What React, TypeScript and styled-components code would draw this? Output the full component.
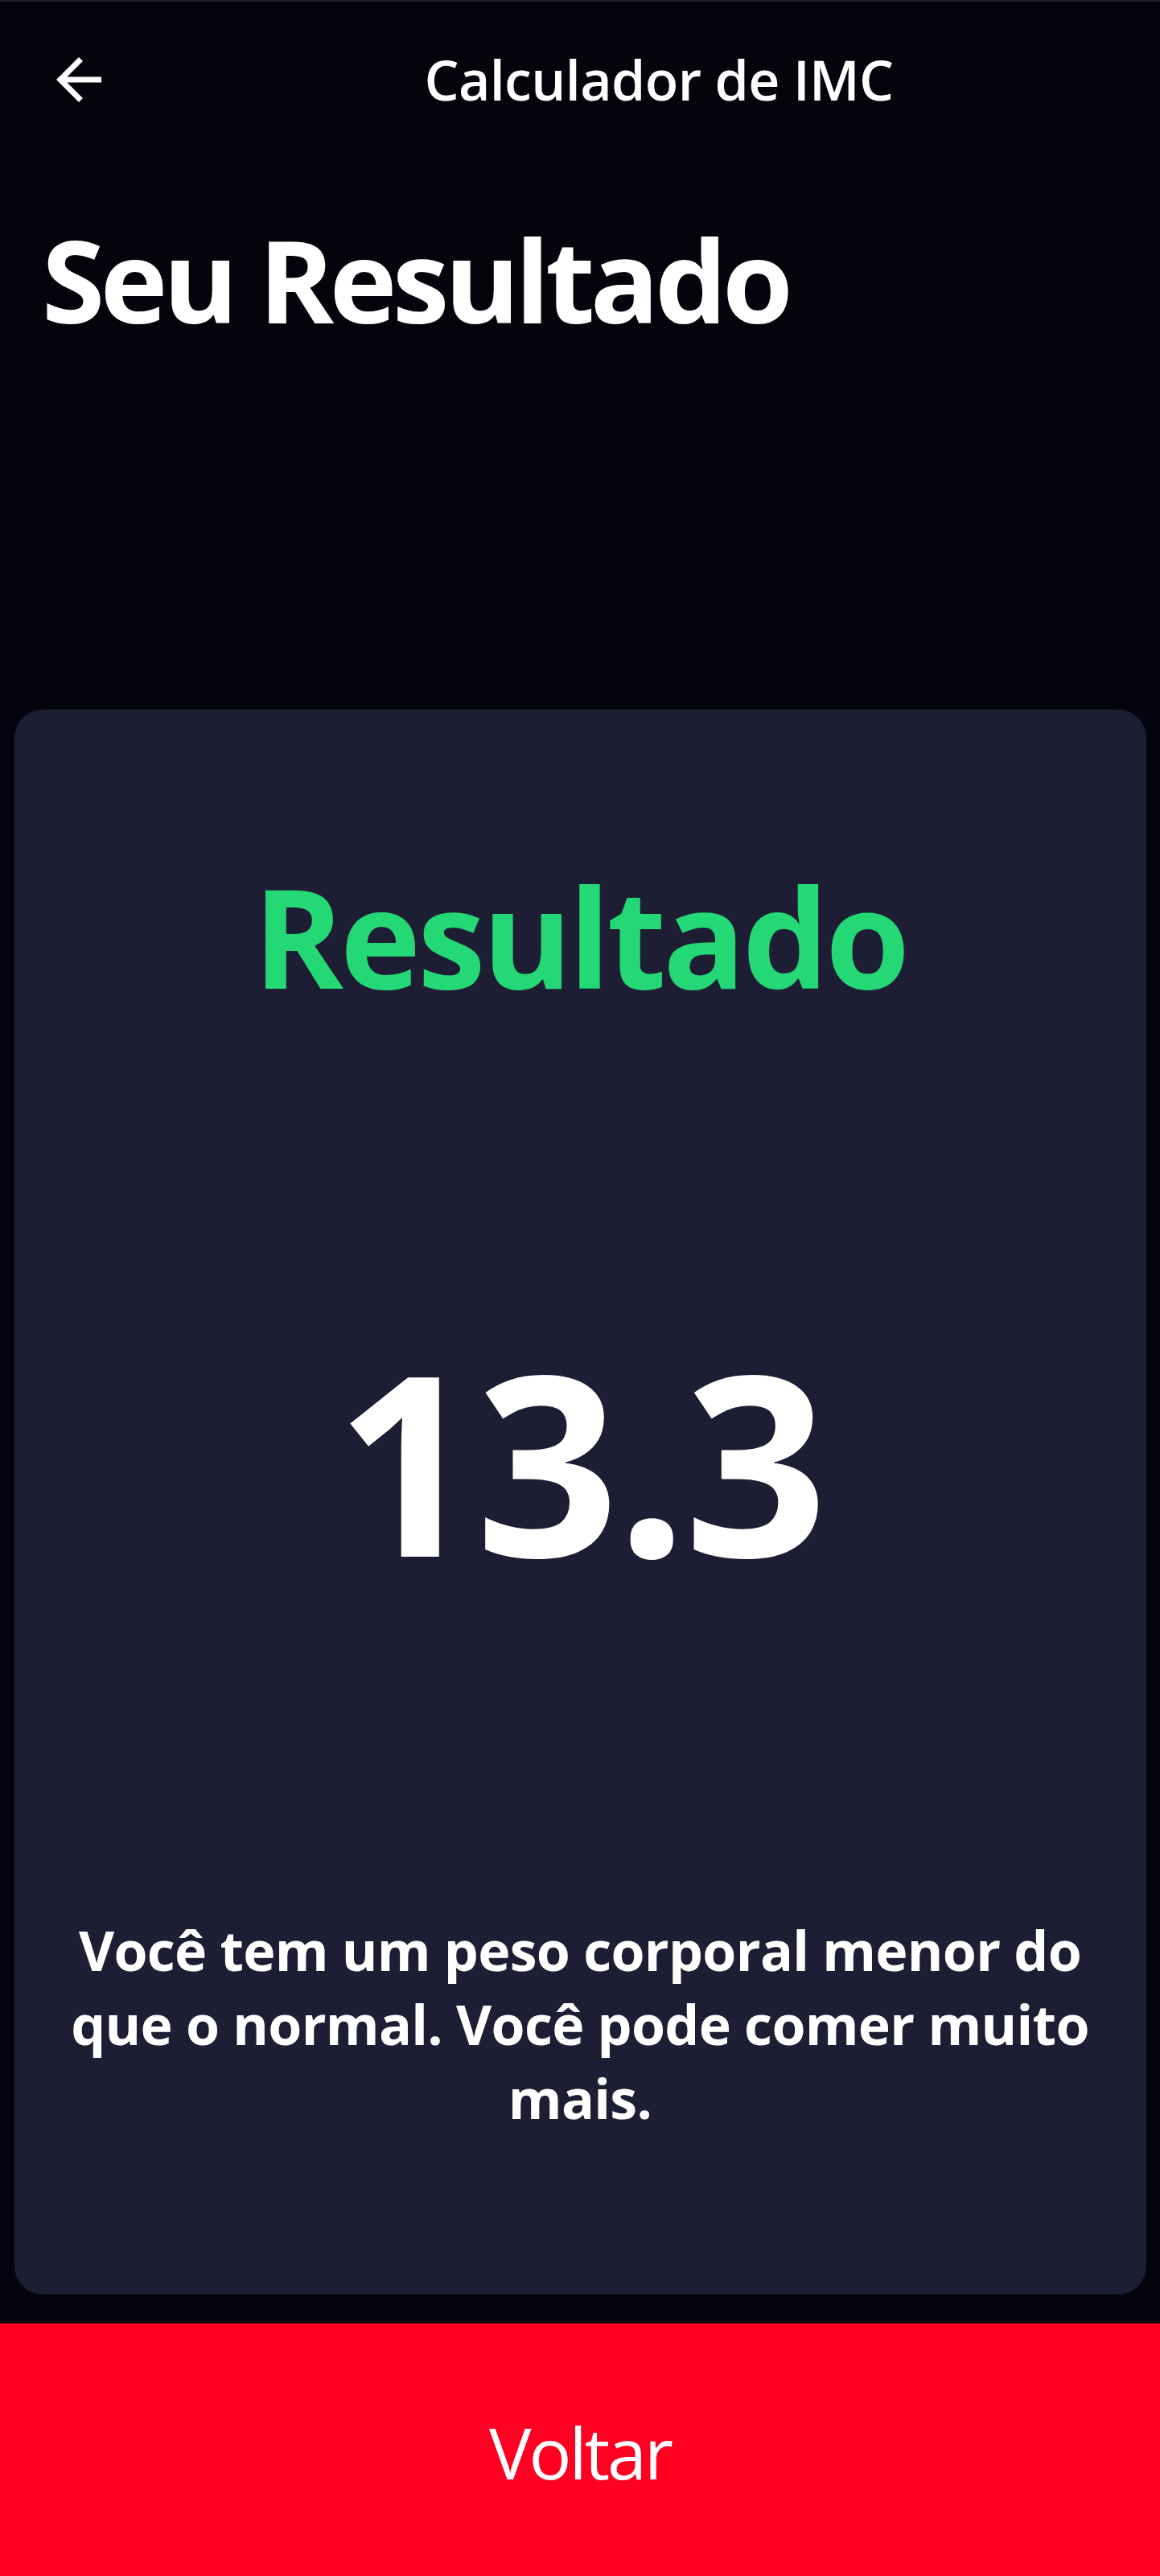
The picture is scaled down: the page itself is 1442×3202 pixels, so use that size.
import React from 'react';
import styled, { createGlobalStyle } from 'styled-components';

const FONT = `'Open Sans', 'Noto Sans', sans-serif`;

const Global = createGlobalStyle`
  html, body { margin: 0; padding: 0; background: #03040c; }
  body { font-family: ${FONT}; }
  * { box-sizing: border-box; }
`;

const Page = styled.div`
  min-height: 100vh;
  display: flex;
  flex-direction: column;
  background: #03040c;
  border-top: 2px solid #1f2027;
`;

const AppBar = styled.header`
  height: 194px;
  flex: none;
  display: flex;
  align-items: center;
`;

const Leading = styled.button`
  width: 196px;
  height: 194px;
  flex: none;
  display: flex;
  align-items: center;
  justify-content: center;
  background: none;
  border: 0;
  padding: 0;
  color: #fff;
  cursor: pointer;
`;

const BarTitle = styled.h1`
  flex: 1;
  margin: 0;
  text-align: center;
  color: #fff;
  font-size: 68px;
  font-weight: 600;
  line-height: 1;
  letter-spacing: -0.6px;
`;

const Heading = styled.h2`
  margin: 80px 0 0;
  padding: 0 52px;
  font-size: 142px;
  font-weight: 700;
  color: #fff;
  line-height: 1;
  letter-spacing: -5.7px;
`;

const Card = styled.section`
  margin: 464px 17.5px 0;
  height: 1970px;
  flex: none;
  background: #1d1e33;
  border-radius: 35px;
  display: flex;
  flex-direction: column;
  align-items: center;
  padding-top: 196px;
`;

const ResultLabel = styled.p`
  margin: 0;
  color: #24d876;
  font-size: 170px;
  font-weight: 700;
  line-height: 1;
  letter-spacing: -4.2px;
`;

const Score = styled.p`
  margin: 410px 0 0;
  color: #fff;
  font-size: 312px;
  font-weight: 700;
  line-height: 1;
  letter-spacing: -4px;
`;

const Advice = styled.p`
  margin: 408px 0 0;
  color: #fff;
  font-size: 68px;
  font-weight: 700;
  line-height: 92px;
  text-align: center;
  letter-spacing: -0.7px;
`;

const BackButton = styled.button`
  margin-top: auto;
  height: 314px;
  width: 100%;
  flex: none;
  background: #ff0022;
  color: #fff;
  border: 0;
  font-family: ${FONT};
  font-size: 88px;
  font-weight: 400;
  line-height: 1;
  letter-spacing: -3px;
  padding-top: 6px;
  cursor: pointer;
`;

function ArrowBack() {
  return (
    <svg width="84" height="84" viewBox="0 0 24 24" fill="currentColor" aria-hidden="true">
      <path d="M20 11H7.83l5.59-5.59L12 4l-8 8 8 8 1.41-1.41L7.83 13H20v-2z" />
    </svg>
  );
}

export default function App() {
  return (
    <>
      <Global />
      <Page>
        <AppBar>
          <Leading aria-label="Voltar">
            <ArrowBack />
          </Leading>
          <BarTitle>Calculador de IMC</BarTitle>
        </AppBar>
        <Heading>Seu Resultado</Heading>
        <Card>
          <ResultLabel>Resultado</ResultLabel>
          <Score>13.3</Score>
          <Advice>
            Você tem um peso corporal menor do
            <br />
            que o normal. Você pode comer muito
            <br />
            mais.
          </Advice>
        </Card>
        <BackButton>Voltar</BackButton>
      </Page>
    </>
  );
}
